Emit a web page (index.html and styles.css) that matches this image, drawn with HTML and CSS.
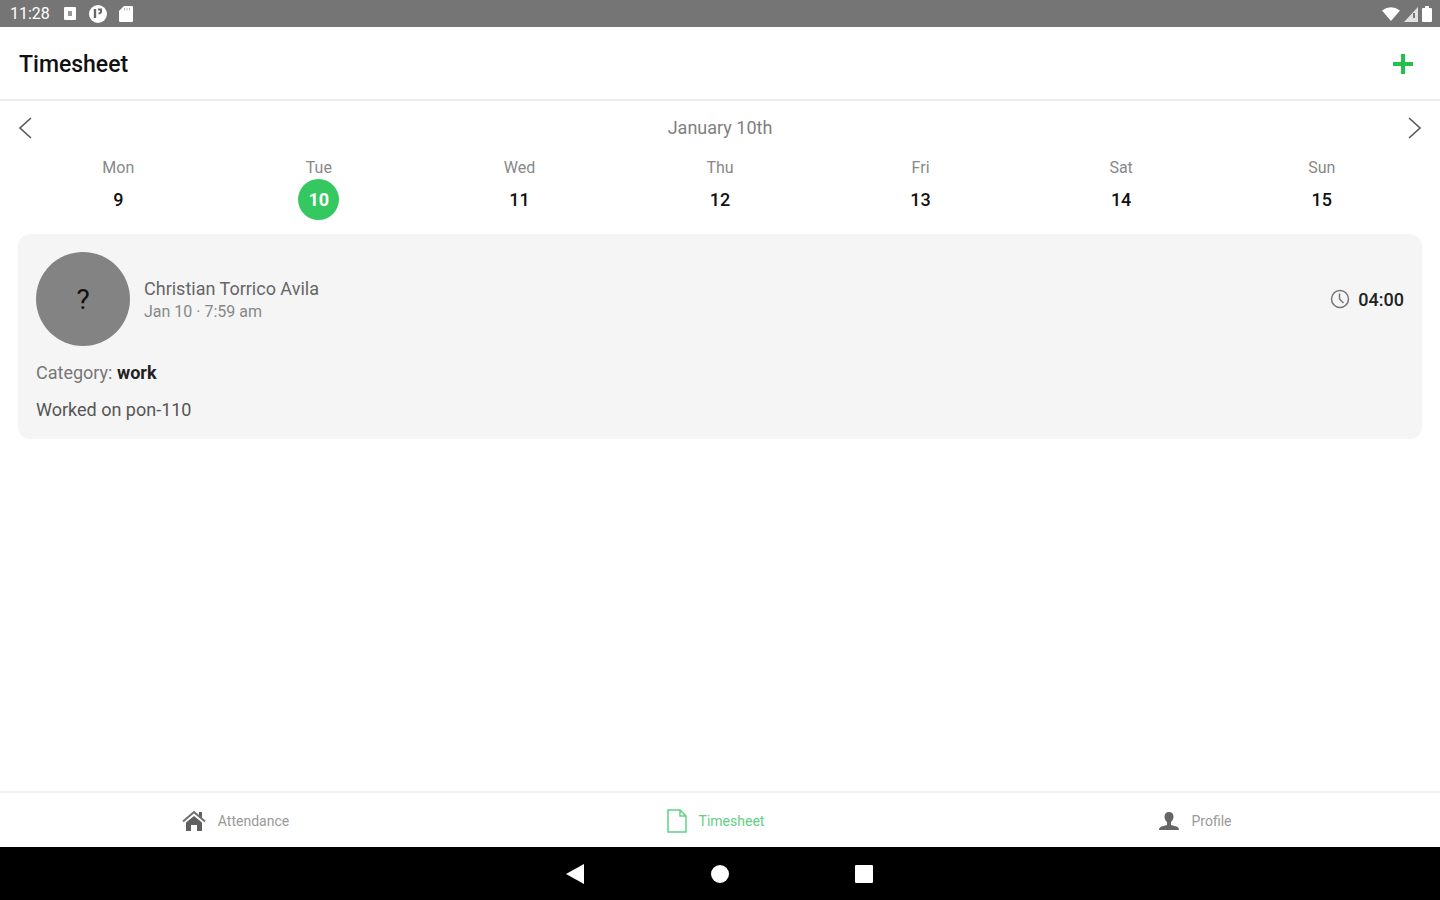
FILE: index.html
```html
<!DOCTYPE html>
<html lang="en">
<head>
<meta charset="utf-8">
<meta name="viewport" content="width=device-width, initial-scale=1">
<title>Timesheet</title>
<link rel="stylesheet" href="styles.css">
</head>
<body>
<div class="status">
  <div class="status-left">
    <span class="clock">11:28</span>
    <svg width="14" height="16" viewBox="0 0 14 16"><rect x="1" y="1" width="12" height="13" rx="1" fill="#fff"/><rect x="5" y="5" width="4" height="5" fill="#999"/></svg>
    <svg width="18" height="18" viewBox="0 0 18 18"><circle cx="9" cy="9" r="9" fill="#fff"/><path d="M6 4v9" fill="none" stroke="#666" stroke-width="2.400"/><path d="M9 4.500h3v2.500q0 1-2.500 1.500" fill="none" stroke="#666" stroke-width="2"/></svg>
    <svg width="14" height="16" viewBox="0 0 14 16"><path d="M5 0h8a1 1 0 0 1 1 1v14a1 1 0 0 1-1 1H1a1 1 0 0 1-1-1V5z" fill="#fff"/><path d="M5.500 2v2.500M8 2v2.500M10.500 2v2.500" stroke="#bbb"/></svg>
  </div>
  <div class="status-right">
    <svg width="18" height="14" viewBox="0 0 18 14"><path d="M0 3.500Q9-3 18 3.500L9 14z" fill="#fff"/></svg>
    <svg width="14" height="15" viewBox="0 0 14 15"><path d="M14 0v15H0z" fill="#e2e2e2"/><path d="M10 6v5" stroke="#777" stroke-width="2"/></svg>
    <svg width="10" height="16" viewBox="0 0 10 16"><path d="M3 0h4v2h2a1 1 0 0 1 1 1v12a1 1 0 0 1-1 1H1a1 1 0 0 1-1-1V3a1 1 0 0 1 1-1h2z" fill="#fff"/></svg>
  </div>
</div>
<header class="header">
  <h1>Timesheet</h1>
  <button class="icon-btn" aria-label="Add entry"><svg width="20" height="20" viewBox="0 0 20 20"><path d="M10 0v20M0 10h20" stroke="#22c14f" stroke-width="4"/></svg></button>
</header>
<main class="main">
  <div class="date-row">
    <button class="icon-btn" aria-label="Previous week"><svg width="14" height="22" viewBox="0 0 14 22"><path d="M13 1L2 11l11 10" fill="none" stroke="#555" stroke-width="1.600"/></svg></button>
    <span class="date">January 10th</span>
    <button class="icon-btn" aria-label="Next week"><svg width="14" height="22" viewBox="0 0 14 22"><path d="M1 1l11 10L1 21" fill="none" stroke="#555" stroke-width="1.600"/></svg></button>
  </div>
  <div class="week">
    <button class="day"><span class="name">Mon</span><span class="num">9</span></button>
    <button class="day selected"><span class="name">Tue</span><span class="num">10</span></button>
    <button class="day"><span class="name">Wed</span><span class="num">11</span></button>
    <button class="day"><span class="name">Thu</span><span class="num">12</span></button>
    <button class="day"><span class="name">Fri</span><span class="num">13</span></button>
    <button class="day"><span class="name">Sat</span><span class="num">14</span></button>
    <button class="day"><span class="name">Sun</span><span class="num">15</span></button>
  </div>
  <article class="card">
    <div class="card-head">
      <div class="avatar">?</div>
      <div class="who">
        <div class="person">Christian Torrico Avila</div>
        <div class="when">Jan 10 · 7:59 am</div>
      </div>
      <div class="duration">
        <svg width="20" height="20" viewBox="0 0 20 20" fill="none" stroke="#777" stroke-width="1.500"><circle cx="10" cy="10" r="8.500"/><path d="M9.500 4.500V10l4 4"/></svg>
        <span>04:00</span>
      </div>
    </div>
    <p class="category">Category: <strong>work</strong></p>
    <p class="note">Worked on pon-110</p>
  </article>
</main>
<nav class="tabs">
  <a href="#attendance" class="tab"><svg width="24" height="22" viewBox="0 0 24 22"><path d="M1 11.500L12 2l11 9.500" fill="none" stroke="#707070" stroke-width="2"/><path d="M17 2h3v6l-3-2.500zM4 12.500L12 6l8 6.500V21h-5v-6H9v6H4z" fill="#606060"/></svg><span>Attendance</span></a>
  <a href="#timesheet" class="tab active"><svg width="20" height="24" viewBox="0 0 20 24"><path d="M1 1h12l6 6v16H1zM13 1v6h6" fill="none" stroke="#62cf83" stroke-width="1.500"/></svg><span>Timesheet</span></a>
  <a href="#profile" class="tab"><svg width="20" height="20" viewBox="0 0 20 20"><path d="M10 1c3 0 4.500 2 4.500 4.500 0 2.500-1 4.500-2.500 5.500v3l5.500 1.500c1.500.5 2.500 1.500 2.500 3.500H0c0-2 1-3 2.500-3.500L8 14v-3C6.500 10 5.500 8 5.500 5.500 5.500 3 7 1 10 1z" fill="#666"/></svg><span>Profile</span></a>
</nav>
<div class="system">
  <button class="icon-btn" aria-label="Back"><svg width="20" height="20" viewBox="0 0 20 20"><path d="M18 0v20L0 10z" fill="#fff"/></svg></button>
  <button class="icon-btn" aria-label="Home"><svg width="20" height="20" viewBox="0 0 20 20"><circle cx="10" cy="10" r="9" fill="#fff"/></svg></button>
  <button class="icon-btn" aria-label="Recent apps"><svg width="20" height="20" viewBox="0 0 20 20"><rect x="1" y="1" width="18" height="18" rx="1" fill="#fff"/></svg></button>
</div>
</body>
</html>
```
FILE: styles.css
```css
* { box-sizing: border-box; }
body {
  margin: 0;
  min-height: 100vh;
  display: flex;
  flex-direction: column;
  background: #fff;
  color: #111;
  font-family: Roboto, "Liberation Sans", sans-serif;
}
button {
  padding: 0;
  border: 0;
  background: none;
  color: inherit;
  font: inherit;
  cursor: pointer;
}
svg { display: block; flex: none; }
p { margin: 0; }
.icon-btn { display: flex; }
.status {
  display: flex;
  justify-content: space-between;
  align-items: center;
  height: 27px;
  padding: 1px 8px 0 10px;
  background: #757575;
}
.status-left { display: flex; align-items: center; gap: 12px; }
.status-right { display: flex; align-items: center; gap: 4px; }
.clock { width: 41px; color: #fff; font-size: 16px; line-height: 20px; }
.header {
  display: flex;
  justify-content: space-between;
  align-items: center;
  height: 74px;
  padding: 1px 27px 0 19px;
  border-bottom: 2px solid #ebebeb;
}
h1 { margin: 0; padding-top: 3px; font-size: 23px; line-height: 28px; font-weight: 500; }
.main { flex: 1; padding: 16px 18px; }
.date-row {
  display: flex;
  justify-content: space-between;
  align-items: center;
  height: 22px;
}
.date { font-size: 18px; line-height: 22px; color: #808080; }
.week { display: grid; grid-template-columns: repeat(7, 1fr); padding-top: 19px; }
.day { display: flex; flex-direction: column; align-items: center; gap: 1px; }
.name { font-size: 16px; line-height: 20px; color: #888; }
.num {
  display: flex;
  align-items: center;
  justify-content: center;
  width: 41px;
  height: 41px;
  border-radius: 50%;
  font-size: 18px;
  line-height: 20px;
  font-weight: 500;
}
.selected .num { background: #36c860; color: #fff; font-weight: 700; }
.card {
  margin-top: 14px;
  padding: 18px 18px 17px;
  border-radius: 12px;
  background: #f5f5f5;
}
.card-head { display: flex; align-items: center; gap: 14px; }
.avatar {
  display: flex;
  align-items: center;
  justify-content: center;
  width: 94px;
  height: 94px;
  border-radius: 50%;
  background: #838383;
  font-size: 28px;
}
.who { flex: 1; padding-top: 2px; }
.person { font-size: 18px; line-height: 24px; color: #666; }
.when { font-size: 16px; line-height: 22px; color: #888; }
.duration { display: flex; align-items: center; gap: 8px; font-size: 18px; font-weight: 500; color: #222; }
.category { margin-top: 15px; font-size: 18px; line-height: 24px; color: #777; }
.category strong { color: #222; }
.note { margin-top: 13px; font-size: 18px; line-height: 24px; color: #555; }
.tabs {
  display: grid;
  grid-template-columns: repeat(3, 1fr);
  height: 56px;
  border-top: 2px solid #f0f0f0;
}
.tab {
  display: flex;
  align-items: center;
  justify-content: center;
  gap: 12px;
  padding: 2px 9px 0 0;
  color: #999;
  font-size: 14px;
  text-decoration: none;
}
.active { color: #62cf83; }
.system {
  display: flex;
  justify-content: center;
  align-items: center;
  gap: 124px;
  height: 53px;
  background: #000;
}
```
